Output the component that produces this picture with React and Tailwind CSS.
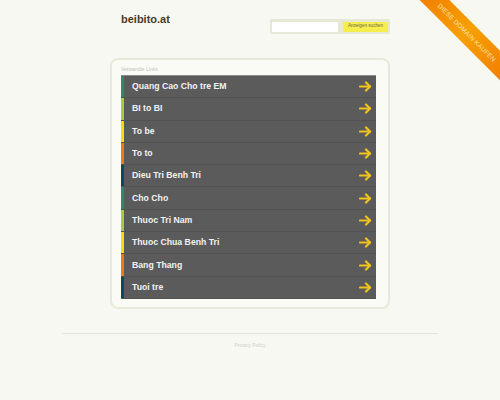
import React from 'react'

const links = [
  { title: 'Quang Cao Cho tre EM', color: 'bg-[#2a8a6a]' },
  { title: 'BI to BI', color: 'bg-[#a8cc3a]' },
  { title: 'To be', color: 'bg-[#f6dc0a]' },
  { title: 'To to', color: 'bg-[#f07a12]' },
  { title: 'Dieu Tri Benh Tri', color: 'bg-[#0f4658]' },
  { title: 'Cho Cho', color: 'bg-[#2a8a6a]' },
  { title: 'Thuoc Tri Nam', color: 'bg-[#a8cc3a]' },
  { title: 'Thuoc Chua Benh Tri', color: 'bg-[#f6dc0a]' },
  { title: 'Bang Thang', color: 'bg-[#f07a12]' },
  { title: 'Tuoi tre', color: 'bg-[#0f4658]' },
]

function Arrow() {
  return (
    <svg width="13" height="11" viewBox="0 0 13 11" fill="none">
      <path d="M1 5.5h10" stroke="#f2c21c" strokeWidth="2.2" strokeLinecap="round" />
      <path d="M7 1.5l4 4-4 4" stroke="#f2c21c" strokeWidth="2.2" strokeLinecap="round" strokeLinejoin="round" />
    </svg>
  )
}

function LinkRow({ link }) {
  return (
    <div className="flex h-[22.3px] items-stretch border-b border-[#525252] bg-[#5b5b5b]">
      <div className={`w-[3px] shrink-0 ${link.color}`} />
      <div className="flex flex-1 items-center justify-between pl-[8px] pr-[4px]">
        <span className="text-[8.7px] font-bold text-[#f2f2f2]">{link.title}</span>
        <Arrow />
      </div>
    </div>
  )
}

export default function App() {
  return (
    <div
      className="relative h-[400px] w-[500px] overflow-hidden bg-[#f8f8f2]"
      style={{ fontFamily: '"Liberation Sans", Arial, sans-serif' }}
    >
      <div className="mx-auto w-[280px]">
        <div className="flex items-start justify-between pl-[11px] pt-[12px]">
          <h1 className="text-[11px] font-bold leading-[14px] text-[#4a3b26]">beibito.at</h1>
          <div className="mt-[7px] flex h-[15px] w-[120px] items-center gap-[5px] rounded-[2px] bg-[#e6e8d6] px-[2px]">
            <div className="h-[10px] w-[66px] rounded-[1px] bg-white" />
            <div className="flex h-[10px] flex-1 items-center justify-center rounded-[1px] bg-[#f5ee4c] text-[4.6px] text-[#6a6a4a]">
              Anzeigen suchen
            </div>
          </div>
        </div>

        <div className="mt-[24px] w-[280px] rounded-[8px] border-2 border-[#e8e9da] bg-[#fbfbf6] pb-[8px] pl-[9px] pr-[12px] pt-[6px]">
          <div className="mb-[2px] text-[5px] leading-[7px] text-[#c0c0b8]">Verwandte Links</div>
          <div className="border-t border-[#8c8c8c]">
            {links.map((link) => (
              <LinkRow key={link.title} link={link} />
            ))}
          </div>
        </div>
      </div>

      <div className="mx-auto mt-[24px] w-[376px] border-t border-[#e4e5da]" />
      <div className="mt-[8px] text-center text-[5px] text-[#cfcfc8]">Privacy Policy</div>

      <div className="absolute left-[392px] top-[22px] flex h-[21px] w-[150px] rotate-45 items-center justify-center bg-gradient-to-r from-[#f07400] via-[#f6a000] to-[#f07400]">
        <span className="text-[6.5px] tracking-[0.2px] text-[#fde6b0]">DIESE DOMAIN KAUFEN</span>
      </div>
    </div>
  )
}
